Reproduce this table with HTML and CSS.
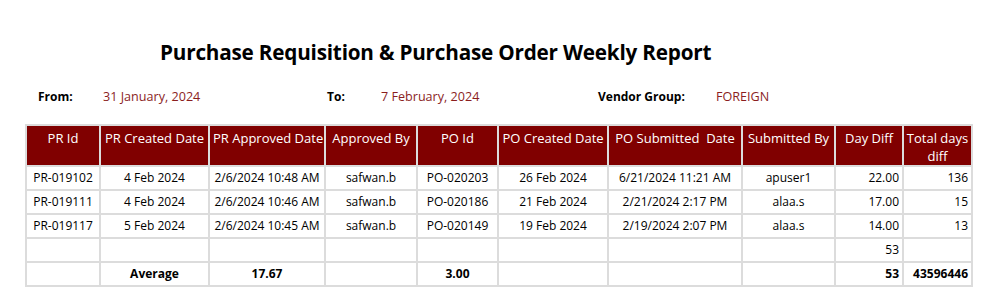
FILE: index.html
```html
<!DOCTYPE html>
<html>
<head>
<meta charset="utf-8">
<link rel="stylesheet" href="styles.css">
</head>
<body>
<div class="report">
  <h1 class="title">Purchase Requisition &amp; Purchase Order Weekly Report</h1>
  <div class="filters">
    <div class="filter f-from"><span class="lbl">From:</span><span class="val">31 January, 2024</span></div>
    <div class="filter f-to"><span class="lbl">To:</span><span class="val">7 February, 2024</span></div>
    <div class="filter f-vendor"><span class="lbl">Vendor Group:</span><span class="val">FOREIGN</span></div>
  </div>
  <table class="grid">
    <colgroup>
      <col class="c1"><col class="c2"><col class="c3"><col class="c4"><col class="c5"><col class="c6"><col class="c7"><col class="c8"><col class="c9"><col class="c10">
    </colgroup>
    <thead>
      <tr>
        <th>PR Id</th><th>PR Created Date</th><th>PR Approved Date</th><th>Approved By</th><th>PO Id</th><th>PO Created Date</th><th>PO Submitted&nbsp; Date</th><th>Submitted By</th><th>Day Diff</th><th class="wrap">Total days diff</th>
      </tr>
    </thead>
    <tbody>
      <tr><td>PR-019102</td><td>4 Feb 2024</td><td>2/6/2024 10:48 AM</td><td>safwan.b</td><td>PO-020203</td><td>26 Feb 2024</td><td>6/21/2024 11:21 AM</td><td>apuser1</td><td class="r">22.00</td><td class="r">136</td></tr>
      <tr><td>PR-019111</td><td>4 Feb 2024</td><td>2/6/2024 10:46 AM</td><td>safwan.b</td><td>PO-020186</td><td>21 Feb 2024</td><td>2/21/2024 2:17 PM</td><td>alaa.s</td><td class="r">17.00</td><td class="r">15</td></tr>
      <tr><td>PR-019117</td><td>5 Feb 2024</td><td>2/6/2024 10:45 AM</td><td>safwan.b</td><td>PO-020149</td><td>19 Feb 2024</td><td>2/19/2024 2:07 PM</td><td>alaa.s</td><td class="r">14.00</td><td class="r">13</td></tr>
      <tr><td></td><td></td><td></td><td></td><td></td><td></td><td></td><td></td><td class="r">53</td><td></td></tr>
      <tr class="total"><td></td><td>Average</td><td>17.67</td><td></td><td>3.00</td><td></td><td></td><td></td><td class="r">53</td><td class="r">43596446</td></tr>
    </tbody>
  </table>
</div>
</body>
</html>
```

FILE: styles.css
```css
html, body {
  margin: 0;
  padding: 0;
  background: #ffffff;
}
body {
  font-family: "Open Sans", "Noto Sans", sans-serif;
  color: #000;
}
.report {
  padding: 38px 0 0 24px;
}
.title {
  margin: 0 0 0 136px;
  font-size: 20.7px;
  font-weight: 700;
  line-height: 28px;
  letter-spacing: -0.2px;
}
.filters {
  display: flex;
  margin: 22px 0 0 14px;
  font-size: 12px;
  line-height: 18px;
}
.filter {
  display: flex;
  align-items: baseline;
}
.lbl {
  font-weight: 700;
}
.val {
  color: #8b1e1e;
  font-size: 12.6px;
}
.f-from { width: 289px; }
.f-from .lbl { width: 65px; }
.f-to { width: 271px; }
.f-to .lbl { width: 54px; }
.f-vendor .lbl { width: 118px; }
.grid {
  margin: 18px 0 0 1px;
  width: 946px;
  border-collapse: collapse;
  table-layout: fixed;
  font-size: 12px;
}
.c1 { width: 74px; }
.c2 { width: 109px; }
.c3 { width: 116px; }
.c4 { width: 92px; }
.c5 { width: 81px; }
.c6 { width: 110px; }
.c7 { width: 134px; }
.c8 { width: 93px; }
.c9 { width: 68px; }
.c10 { width: 69px; }
.grid th, .grid td {
  border: 2px solid #dcdcdc;
  padding: 0 3px;
  text-align: center;
  white-space: nowrap;
  overflow: hidden;
}
.grid th {
  background: #800000;
  color: #fff;
  font-weight: 400;
  font-size: 13px;
  height: 34px;
  vertical-align: top;
  padding-top: 3px;
  line-height: 18px;
}
.grid th.wrap {
  white-space: normal;
  padding: 3px 1px 0;
}
.grid td {
  height: 22px;
  line-height: 18px;
}
.grid td.r { text-align: right; }
.grid tr.total td { font-weight: 700; }
```
